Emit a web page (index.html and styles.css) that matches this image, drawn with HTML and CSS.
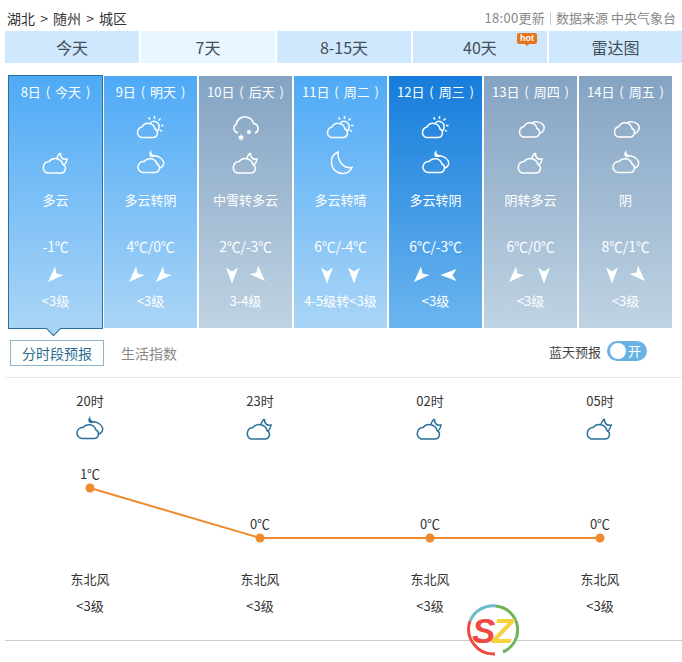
FILE: index.html
```html
<!DOCTYPE html>
<html lang="zh">
<head>
<meta charset="utf-8">
<title>随州天气</title>
<link rel="stylesheet" href="styles.css">
</head>
<body>
<svg class="defs" width="0" height="0" aria-hidden="true">
  <symbol id="cloud-moon" viewBox="2 0 32 28">
    <path d="M9 24H23A4.500 4.500 0 0 0 25 15.500A8 8 0 0 0 11 12.500A6 6 0 0 0 9 24Z"/>
    <path d="M22.500 4C22 8 24.500 11 29 10C28.500 13 27.500 15 25.500 16M22.500 4C20.500 5 19.500 7 19 9"/>
  </symbol>
  <symbol id="cloud-sun" viewBox="2 0 32 28">
    <path d="M8 23.500H20A4.500 4.500 0 0 0 22 15A7 7 0 0 0 9 13A5.500 5.500 0 0 0 8 23.500Z"/>
    <path d="M17.500 9A5 5 0 0 1 26 13.500A5 5 0 0 1 24.500 17"/>
    <path d="M21.500 2V5M27.500 4.500L25.500 6.500M30.500 11.500H28M29 17.500L27 16M15.500 3.500L17 5.500"/>
  </symbol>
  <symbol id="cloud-night" viewBox="0 0 32 28">
    <path d="M8 23.500H20A4.500 4.500 0 0 0 22 15A7.500 7.500 0 0 0 9 12.500A5.500 5.500 0 0 0 8 23.500Z"/>
    <path d="M17 7C21 6 27 8.500 28.500 12.500C29.500 16 27 19 24 19"/>
    <path class="fill" d="M16.500 1C15.500 3.500 17 6 20.500 6.500C19 8.500 15.500 9 14.500 6.500C13.800 4.500 14.800 2.300 16.500 1Z"/>
  </symbol>
  <symbol id="overcast" viewBox="1 0 32 28">
    <path d="M9 23H21A4.500 4.500 0 0 0 23 14.500A7 7 0 0 0 10 12.500A5.500 5.500 0 0 0 9 23Z"/>
    <path d="M18 9C21 7 26 7.500 29 10.500C31.500 13.500 30 18 26 19.500"/>
  </symbol>
  <symbol id="moon" viewBox="0 0 32 28">
    <path d="M13 3C8.500 5 6 9 6.500 14C7 20.500 12.500 25 18.500 24.500C22.500 24 25.500 22 27 18.500C20 20 12.500 14 13 3Z"/>
  </symbol>
  <symbol id="snow" viewBox="0 0 32 28">
    <path d="M8 19C3.500 18 2.500 12.500 6 10.500C7 5 13 1 18 3.500C21 4.500 23 7 23.500 9.500C28.500 10 30 17 25 19"/>
    <circle class="fill" cx="19" cy="18" r="2"/>
    <path d="M11 20V27M8 22L14 25.500M14 22L8 25.500" class="thin"/>
    <circle class="fill" cx="11" cy="23.500" r="2"/>
  </symbol>
  <symbol id="dart" viewBox="-9 -9 18 18">
    <polygon points="0,-8.500 6,7.500 0,3.500 -6,7.500"/>
  </symbol>
</svg>

<header class="crumbs">
  <div class="path">湖北 &gt; 随州 &gt; 城区</div>
  <div class="meta"><span class="updated">18:00更新</span><i class="sep"></i><span>数据来源 中央气象台</span></div>
</header>

<nav class="tabs">
  <a class="tab">今天</a>
  <a class="tab on">7天</a>
  <a class="tab">8-15天</a>
  <a class="tab">40天<b class="hot">hot</b></a>
  <a class="tab">雷达图</a>
</nav>

<section class="days">
  <article class="day blue first">
    <h3>8日 ( 今天 )</h3>
    <div class="ico"></div>
    <svg class="ico"><use href="#cloud-moon"/></svg>
    <p class="desc">多云</p>
    <p class="temp">-1℃</p>
    <div class="winds"><svg class="w r225"><use href="#dart"/></svg></div>
    <p class="lvl">&lt;3级</p>
  </article>
  <article class="day blue">
    <h3>9日 ( 明天 )</h3>
    <svg class="ico"><use href="#cloud-sun"/></svg>
    <svg class="ico"><use href="#cloud-night"/></svg>
    <p class="desc">多云转阴</p>
    <p class="temp">4℃/0℃</p>
    <div class="winds"><svg class="w r225"><use href="#dart"/></svg><svg class="w r225"><use href="#dart"/></svg></div>
    <p class="lvl">&lt;3级</p>
  </article>
  <article class="day grey">
    <h3>10日 ( 后天 )</h3>
    <svg class="ico"><use href="#snow"/></svg>
    <svg class="ico"><use href="#cloud-moon"/></svg>
    <p class="desc">中雪转多云</p>
    <p class="temp">2℃/-3℃</p>
    <div class="winds"><svg class="w r180"><use href="#dart"/></svg><svg class="w r135"><use href="#dart"/></svg></div>
    <p class="lvl">3-4级</p>
  </article>
  <article class="day blue">
    <h3>11日 ( 周二 )</h3>
    <svg class="ico"><use href="#cloud-sun"/></svg>
    <svg class="ico"><use href="#moon"/></svg>
    <p class="desc">多云转晴</p>
    <p class="temp">6℃/-4℃</p>
    <div class="winds"><svg class="w r180"><use href="#dart"/></svg><svg class="w r180"><use href="#dart"/></svg></div>
    <p class="lvl">4-5级转&lt;3级</p>
  </article>
  <article class="day deep">
    <h3>12日 ( 周三 )</h3>
    <svg class="ico"><use href="#cloud-sun"/></svg>
    <svg class="ico"><use href="#cloud-night"/></svg>
    <p class="desc">多云转阴</p>
    <p class="temp">6℃/-3℃</p>
    <div class="winds"><svg class="w r225"><use href="#dart"/></svg><svg class="w r270"><use href="#dart"/></svg></div>
    <p class="lvl">&lt;3级</p>
  </article>
  <article class="day grey">
    <h3>13日 ( 周四 )</h3>
    <svg class="ico"><use href="#overcast"/></svg>
    <svg class="ico"><use href="#cloud-moon"/></svg>
    <p class="desc">阴转多云</p>
    <p class="temp">6℃/0℃</p>
    <div class="winds"><svg class="w r225"><use href="#dart"/></svg><svg class="w r180"><use href="#dart"/></svg></div>
    <p class="lvl">&lt;3级</p>
  </article>
  <article class="day grey">
    <h3>14日 ( 周五 )</h3>
    <svg class="ico"><use href="#overcast"/></svg>
    <svg class="ico"><use href="#cloud-night"/></svg>
    <p class="desc">阴</p>
    <p class="temp">8℃/1℃</p>
    <div class="winds"><svg class="w r180"><use href="#dart"/></svg><svg class="w r135"><use href="#dart"/></svg></div>
    <p class="lvl">&lt;3级</p>
  </article>
</section>

<section class="subbar">
  <a class="sub on">分时段预报</a>
  <a class="sub">生活指数</a>
  <div class="sky">
    <span>蓝天预报</span>
    <span class="toggle"><i class="knob"></i>开</span>
  </div>
</section>

<section class="hours">
  <div class="hrow">
    <div class="hcell"><span>20时</span><svg class="ico dark"><use href="#cloud-night"/></svg></div>
    <div class="hcell"><span>23时</span><svg class="ico dark"><use href="#cloud-moon"/></svg></div>
    <div class="hcell"><span>02时</span><svg class="ico dark"><use href="#cloud-moon"/></svg></div>
    <div class="hcell"><span>05时</span><svg class="ico dark"><use href="#cloud-moon"/></svg></div>
  </div>
  <svg class="chart" viewBox="0 0 677 120" width="677" height="120">
    <polyline points="85,42 255,92 425,92 595,92"/>
    <circle cx="85" cy="42" r="4.500"/><circle cx="255" cy="92" r="4.500"/><circle cx="425" cy="92" r="4.500"/><circle cx="595" cy="92" r="4.500"/>
    <text x="85" y="33">1℃</text><text x="255" y="83">0℃</text><text x="425" y="83">0℃</text><text x="595" y="83">0℃</text>
  </svg>
  <div class="hrow winds-row">
    <div class="hcell"><span>东北风</span><span>&lt;3级</span></div>
    <div class="hcell"><span>东北风</span><span>&lt;3级</span></div>
    <div class="hcell"><span>东北风</span><span>&lt;3级</span></div>
    <div class="hcell"><span>东北风</span><span>&lt;3级</span></div>
  </div>
</section>

<svg class="logo" viewBox="0 0 52 52" width="52" height="52" aria-hidden="true">
  <circle class="disc" cx="26" cy="26" r="25"/>
  <path class="arc-blue" d="M3 17A25 25 0 0 1 29 2"/>
  <path class="arc-green" d="M29 2A24 24 0 0 1 36 48"/>
  <path class="arc-red" d="M3 17A25 25 0 0 0 28 50"/>
  <text x="5" y="39"><tspan class="s">S</tspan><tspan class="z">Z</tspan></text>
</svg>
</body>
</html>
```
FILE: styles.css
```css
* { box-sizing: border-box; }
html, body { margin: 0; padding: 0; }
body {
  width: 682px;
  height: 662px;
  overflow: hidden;
  position: relative;
  background: #fff;
  color: #333;
  font-family: "Noto Sans CJK SC", "Liberation Sans", sans-serif;
  font-size: 13px;
}
.defs { position: absolute; }
h3, p { margin: 0; font-weight: 400; }

.crumbs {
  height: 31px;
  display: flex;
  justify-content: space-between;
  align-items: flex-end;
  padding: 0 6px 4px 7px;
}
.path { font-size: 14px; line-height: 18px; color: #333; word-spacing: 2px; }
.meta { display: flex; align-items: center; color: #888; font-size: 13px; line-height: 18px; }
.updated { letter-spacing: .3px; }
.sep { width: 1px; height: 13px; background: #ccc; margin: 0 5px; }

.tabs { display: flex; gap: 2px; margin-left: 5px; height: 32px; }
.tab {
  position: relative;
  width: 134px;
  flex: none;
  background: #cfe8fd;
  color: #434e58;
  font-size: 16px;
  line-height: 32px;
  text-align: center;
}
.tab:last-child { width: 133px; }
.tab.on { background: #e9f6ff; }
.hot {
  position: absolute;
  left: 104px;
  top: 2px;
  width: 20px;
  height: 11px;
  border-radius: 2px;
  background: #e8751c;
  color: #fff;
  font: 700 9px/11px "Liberation Sans", sans-serif;
}
.hot::after {
  content: "";
  position: absolute;
  left: 8px;
  top: 11px;
  border: 2px solid transparent;
  border-top-color: #e8751c;
}

.days { display: flex; gap: 2px; margin: 13px 0 0 9px; height: 252px; }
.day {
  position: relative;
  width: 93px;
  flex: none;
  padding-top: 6px;
  color: #fff;
  text-align: center;
  display: flex;
  flex-direction: column;
  align-items: center;
}
.blue { background: linear-gradient(#4eaaf6, #aad5f6); }
.grey { background: linear-gradient(#84a3c3, #bfd3e3); }
.deep { background: linear-gradient(#167ddb, #6cb5ef); }
.first {
  width: 95px;
  margin-left: -1px;
  margin-right: -1px;
  margin-top: -1px;
  height: 254px;
  padding-top: 6px;
  border: 1px solid #2d7199;
}
.first::after {
  content: "";
  position: absolute;
  left: 38.500px;
  top: 247px;
  width: 10px;
  height: 10px;
  background: #a8d4f6;
  border-right: 1px solid #2d7199;
  border-bottom: 1px solid #2d7199;
  transform: rotate(45deg);
}
.day h3 { font-size: 13px; line-height: 20px; white-space: nowrap; word-spacing: 2px; }
.ico { display: block; width: 32px; height: 28px; fill: none; stroke: currentColor; stroke-width: 1.500; flex: none; color: #fff; }
.day h3 + .ico { margin-top: 12px; }
.day .ico + .ico { margin-top: 7px; }
.fill { fill: currentColor; stroke: none; }
.thin { stroke-width: .8; }
.ico.dark { color: #2a7299; }
.desc { margin-top: 13px; line-height: 20px; font-size: 13px; white-space: nowrap; }
.temp { margin-top: 26px; line-height: 20px; font-size: 14px; white-space: nowrap; letter-spacing: -.2px; }
.winds { display: flex; gap: 9px; margin-top: 9px; height: 20px; align-items: center; justify-content: center; }
.w { width: 18px; height: 18px; fill: #fff; flex: none; }
.r135 { transform: rotate(135deg); }
.r180 { transform: rotate(180deg); }
.r225 { transform: translate(-2px, 1px) rotate(225deg); }
.r270 { transform: rotate(270deg); }
.lvl { margin-top: 6px; line-height: 20px; font-size: 13px; white-space: nowrap; }

.subbar { display: flex; align-items: center; height: 49px; margin-left: 10px; }
.sub { font-size: 14px; color: #888; line-height: 24px; }
.sub.on { width: 94px; height: 26px; border: 1px solid #8fb4c8; color: #2a6b8f; text-align: center; margin-right: 17px; }
.sky { margin-left: auto; margin-right: 35px; display: flex; align-items: center; gap: 6px; color: #444; font-size: 13px; margin-top: -3px; }
.toggle {
  position: relative;
  width: 40px;
  height: 20px;
  border-radius: 10px;
  background: #68b3e4;
  color: #fff;
  padding-left: 21px;
  font-size: 13px;
  line-height: 20px;
}
.knob { position: absolute; left: 3px; top: 2px; width: 16px; height: 16px; border-radius: 50%; background: #fff; }

.hours { margin-left: 5px; border-top: 1px solid #e6e6e6; height: 264px; border-bottom: 1px solid #ccc; }
.hrow { display: grid; grid-template-columns: repeat(4, 170px); }
.hcell { display: flex; flex-direction: column; align-items: center; color: #333; font-size: 13px; }
.hcell span { line-height: 20px; }
.hrow:first-child .hcell { padding-top: 13px; }
.hrow:first-child .hcell .ico { margin-top: 4px; }
.chart { display: block; height: 120px; margin-top: 3px; }
.chart polyline { fill: none; stroke: #f08a2f; stroke-width: 2; }
.chart circle { fill: #f08a2f; }
.chart text { fill: #333; font-size: 13px; text-anchor: middle; }
.winds-row { margin-top: 3px; }
.winds-row .hcell span + span { margin-top: 7px; font-size: 13px; }

.logo { position: absolute; left: 467px; top: 604px; }
.disc { fill: #fff; }
.logo path { fill: none; stroke-width: 3; }
.arc-blue { stroke: #6fb9c9; }
.arc-green { stroke: #6fb35c; }
.arc-red { stroke: #ee4a43; }
.logo text { font: italic 700 35px "Liberation Sans", sans-serif; letter-spacing: -3px; }
.logo .s { fill: #ee4a43; }
.logo .z { fill: #f6d23e; }
```
